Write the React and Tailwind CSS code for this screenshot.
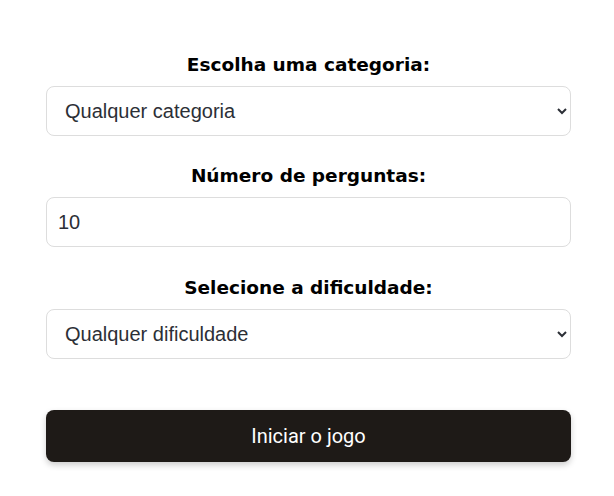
import React, { useState } from 'react';

const labelCls =
  "block text-center text-[18.5px] leading-[27px] font-bold text-black mb-[8px] [font-family:'DejaVu_Sans',sans-serif]";
const fieldCls =
  "w-full h-[50px] text-[20px] text-[#2c2f36] bg-white border border-[#dddddd] rounded-lg outline-none [font-family:'Liberation_Sans',Arial,sans-serif]";

export default function App() {
  const [category, setCategory] = useState('any');
  const [amount, setAmount] = useState('10');
  const [difficulty, setDifficulty] = useState('any');

  return (
    <div className="min-h-[496px] bg-white pt-[51px]">
      <form className="w-[525px] ml-[46px]" onSubmit={(e) => e.preventDefault()}>
        <div className="mb-[26px]">
          <label className={labelCls}>Escolha uma categoria:</label>
          <select
            value={category}
            onChange={(e) => setCategory(e.target.value)}
            className={`${fieldCls} pl-[14px] pr-[6px]`}
          >
            <option value="any">Qualquer categoria</option>
          </select>
        </div>

        <div className="mb-[27px]">
          <label className={labelCls}>Número de perguntas:</label>
          <input
            type="number"
            value={amount}
            onChange={(e) => setAmount(e.target.value)}
            className={`${fieldCls} px-[11px]`}
          />
        </div>

        <div>
          <label className={labelCls}>Selecione a dificuldade:</label>
          <select
            value={difficulty}
            onChange={(e) => setDifficulty(e.target.value)}
            className={`${fieldCls} pl-[14px] pr-[6px]`}
          >
            <option value="any">Qualquer dificuldade</option>
          </select>
        </div>

        <button
          type="submit"
          className="mt-[51px] w-full h-[52px] rounded-lg bg-[#1e1a17] text-white text-[20px] shadow-[0_3px_6px_rgba(0,0,0,0.2)] [font-family:Roboto,sans-serif]"
        >
          Iniciar o jogo
        </button>
      </form>
    </div>
  );
}
